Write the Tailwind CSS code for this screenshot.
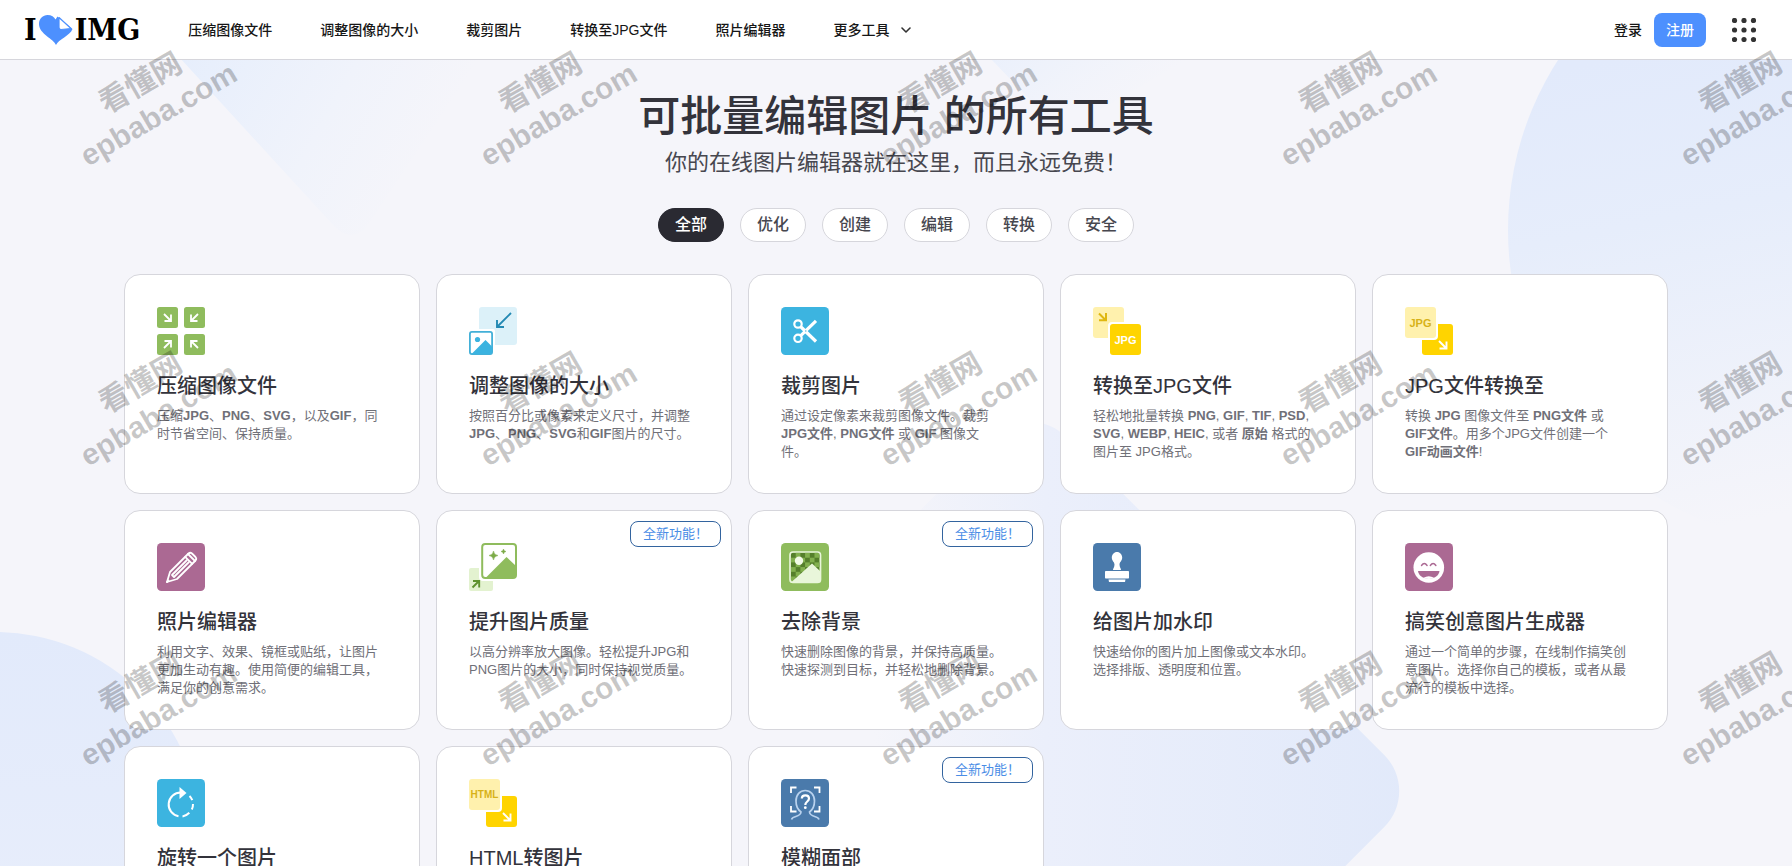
<!DOCTYPE html>
<html lang="zh-CN">
<head>
<meta charset="utf-8">
<meta name="viewport" content="width=device-width, initial-scale=1">
<title>iLoveIMG</title>
<script src="https://cdn.jsdelivr.net/npm/@tailwindcss/browser@4"></script>
</head>
<body class="bg-[#f5f5fa] font-['Liberation_Sans','Noto_Sans_CJK_SC',sans-serif] text-[#33333b]">
<div class="relative isolate h-screen overflow-hidden">

  <!-- Decorative background shapes -->
  <svg class="absolute inset-0 -z-10 h-full w-full" viewBox="0 0 1792 866" preserveAspectRatio="xMidYMin slice" aria-hidden="true">
    <defs>
      <linearGradient id="bgA" x1="0" y1="0" x2="0.9" y2="0.3"><stop offset="0" stop-color="#e6eefc"/><stop offset="0.6" stop-color="#f0f3fb"/><stop offset="1" stop-color="#f5f5fa"/></linearGradient>
      <linearGradient id="bgB" x1="0.3" y1="0.2" x2="0.45" y2="0.95"><stop offset="0" stop-color="#e2eafb"/><stop offset="0.35" stop-color="#e6edfb"/><stop offset="1" stop-color="#f5f5fa"/></linearGradient>
      <linearGradient id="bgC" x1="0" y1="1" x2="1" y2="0"><stop offset="0.3" stop-color="#f5f5fa"/><stop offset="0.52" stop-color="#ebeffb"/><stop offset="1" stop-color="#e1e9fa"/></linearGradient>
      <linearGradient id="bgD" x1="0" y1="0" x2="0" y2="1"><stop offset="0" stop-color="#e2eafb"/><stop offset="1" stop-color="#eaeffb"/></linearGradient>
    </defs>
    <path d="M180 58L334 226Q354 246 370 222L480 58Z" fill="url(#bgA)"/>
    <path d="M990 58L1040 110L1100 110L1190 58Z" fill="url(#bgA)" opacity=".7"/>
    <circle cx="1822" cy="230" r="314" fill="url(#bgB)"/>
    <circle cx="-5" cy="839" r="207" fill="url(#bgD)"/>
    <rect x="754" y="515" width="552" height="552" rx="51" transform="rotate(45 1030 791)" fill="url(#bgC)"/>
  </svg>

  <header class="flex h-[60px] items-center border-b border-[#d6d6dc] bg-white px-6 text-sm font-medium text-[#161616]">
    <a href="#" aria-label="I love IMG" class="mr-12 flex items-center gap-0.5 font-['DejaVu_Serif_Condensed','DejaVu_Serif',serif] text-[30px] leading-9 font-bold text-black">
      <span>I</span>
      <svg class="h-[30px] w-[34px]" viewBox="0 0 34 30" aria-hidden="true">
        <path d="M17 30C15 24 0 19 0 9C0 3.500 4 0 8.500 0C12.500 0 15.200 2 16.500 4.500L18.500 1.500L33.500 14C31 21 19.500 24 17 30Z" fill="#4d90fe"/>
        <path d="M20 2.500L32 13.500L22 14.500Q20 14.500 20 12.500Z" fill="#fff" stroke="#4d90fe" stroke-width="1.200" stroke-linejoin="round"/>
      </svg>
      <span>IMG</span>
    </a>
    <nav class="flex items-center gap-12">
      <a href="#">压缩图像文件</a>
      <a href="#">调整图像的大小</a>
      <a href="#">裁剪图片</a>
      <a href="#">转换至JPG文件</a>
      <a href="#">照片编辑器</a>
      <button type="button" class="flex items-center gap-3">更多工具
        <svg class="size-[10px]" viewBox="0 0 10 10" fill="none" stroke="#333" stroke-width="1.600" stroke-linecap="round" stroke-linejoin="round" aria-hidden="true"><path d="M1 3L5 7L9 3"/></svg>
      </button>
    </nav>
    <div class="ml-auto flex items-center gap-3 pr-3">
      <a href="#">登录</a>
      <a href="#" class="rounded-lg bg-[#4d90fe] px-3 py-[7px] leading-5 text-white">注册</a>
      <button type="button" aria-label="全部工具" class="ml-[14px]">
        <svg class="size-6" viewBox="0 0 24 24" fill="#333" aria-hidden="true"><circle cx="2.500" cy="2.500" r="2.600"/><circle cx="12" cy="2.500" r="2.600"/><circle cx="21.500" cy="2.500" r="2.600"/><circle cx="2.500" cy="12" r="2.600"/><circle cx="12" cy="12" r="2.600"/><circle cx="21.500" cy="12" r="2.600"/><circle cx="2.500" cy="21.500" r="2.600"/><circle cx="12" cy="21.500" r="2.600"/><circle cx="21.500" cy="21.500" r="2.600"/></svg>
      </button>
    </div>
  </header>

  <main class="mx-auto max-w-[1544px] pt-[33px]">
    <h1 class="text-center text-[42px] leading-[48px] font-medium">可批量编辑图片 的所有工具</h1>
    <p class="mt-1.5 text-center text-[22px] leading-8 text-[#47474f]">你的在线图片编辑器就在这里，而且永远免费！</p>

    <div class="mt-[29px] flex justify-center gap-4 leading-8 font-medium text-[#47474f]">
      <button type="button" class="rounded-full border border-[#2a2a32] bg-[#2a2a32] px-4 text-white">全部</button>
      <button type="button" class="rounded-full border border-[#d6d6dc] bg-white px-4">优化</button>
      <button type="button" class="rounded-full border border-[#d6d6dc] bg-white px-4">创建</button>
      <button type="button" class="rounded-full border border-[#d6d6dc] bg-white px-4">编辑</button>
      <button type="button" class="rounded-full border border-[#d6d6dc] bg-white px-4">转换</button>
      <button type="button" class="rounded-full border border-[#d6d6dc] bg-white px-4">安全</button>
    </div>

    <div class="mt-8 grid auto-rows-[220px] grid-cols-5 gap-4 text-[13px] leading-[18px] text-[#707078]">

      <a href="#" class="relative rounded-2xl border border-[#d6d6dc] bg-white p-8">
        <svg class="mb-[17px] size-12" viewBox="0 0 48 48" aria-hidden="true">
          <g fill="#8fbc5d"><rect width="21" height="21" rx="2.500"/><rect x="27" width="21" height="21" rx="2.500"/><rect y="27" width="21" height="21" rx="2.500"/><rect x="27" y="27" width="21" height="21" rx="2.500"/></g>
          <g fill="none" stroke="#fff" stroke-width="1.800"><path d="M7 7L14 14M14 7.500V14H7.500"/><path d="M41 7L34 14M34 7.500V14H40.500"/><path d="M7 41L14 34M14 40.500V34H7.500"/><path d="M41 41L34 34M34 40.500V34H40.500"/></g>
        </svg>
        <h3 class="mb-[7px] text-xl leading-7 font-medium text-[#33333b]">压缩图像文件</h3>
        <p>压缩<b class="font-bold">JPG</b>、<b class="font-bold">PNG</b>、<b class="font-bold">SVG</b>，以及<b class="font-bold">GIF</b>，同<br>时节省空间、保持质量。</p>
      </a>

      <a href="#" class="relative rounded-2xl border border-[#d6d6dc] bg-white p-8">
        <svg class="mb-[17px] size-12" viewBox="0 0 48 48" aria-hidden="true">
          <rect x="10" width="38" height="38" rx="3" fill="#dcf1f9"/>
          <path d="M42 6L28.500 19.500M28 13V20H35" fill="none" stroke="#2389b3" stroke-width="1.900"/>
          <path d="M8 22H24Q26 22 26 24V40H8Z" fill="#fff"/>
          <rect x=".900" y="24.900" width="22.200" height="22.200" rx="2" fill="#fff" stroke="#43b0d8" stroke-width="1.800"/>
          <circle cx="8.500" cy="32.500" r="2.600" fill="#3bb3e0"/><path d="M2.500 47L16.500 33L23 39.500V45Q23 47 21 47Z" fill="#3bb3e0"/>
        </svg>
        <h3 class="mb-[7px] text-xl leading-7 font-medium text-[#33333b]">调整图像的大小</h3>
        <p>按照百分比或像素来定义尺寸，并调整<br><b class="font-bold">JPG</b>、<b class="font-bold">PNG</b>、<b class="font-bold">SVG</b>和<b class="font-bold">GIF</b>图片的尺寸。</p>
      </a>

      <a href="#" class="relative rounded-2xl border border-[#d6d6dc] bg-white p-8">
        <svg class="mb-[17px] size-12" viewBox="0 0 48 48" aria-hidden="true">
          <rect width="48" height="48" rx="4.500" fill="#3cb4e0"/>
          <g fill="none" stroke="#fff"><circle cx="17" cy="17" r="3.700" stroke-width="2.200"/><circle cx="17" cy="31.300" r="3.700" stroke-width="2.200"/><path d="M19.500 19.500L35 34.500" stroke-width="3.200"/><path d="M19.500 28.800L35 13.800" stroke-width="3.200"/></g><circle cx="24.800" cy="24" r=".700" fill="#3cb4e0"/>
        </svg>
        <h3 class="mb-[7px] text-xl leading-7 font-medium text-[#33333b]">裁剪图片</h3>
        <p>通过设定像素来裁剪图像文件。裁剪<br><b class="font-bold">JPG文件</b>, <b class="font-bold">PNG文件</b> 或 <b class="font-bold">GIF</b> 图像文<br>件。</p>
      </a>

      <a href="#" class="relative rounded-2xl border border-[#d6d6dc] bg-white p-8">
        <svg class="mb-[17px] size-12" viewBox="0 0 48 48" aria-hidden="true">
          <rect width="31" height="31" rx="3" fill="#fff1ad"/><path d="M6 6.500L12.500 13M13 6V13.200H6" fill="none" stroke="#dfb70f" stroke-width="2"/>
          <rect x="15" y="15" width="33" height="33" rx="4" fill="#fff"/><rect x="17" y="17" width="31" height="31" rx="3" fill="#ffd400"/>
          <text x="32.500" y="36.500" text-anchor="middle" class="text-[11px] font-bold" fill="#fff">JPG</text>
        </svg>
        <h3 class="mb-[7px] text-xl leading-7 font-medium text-[#33333b]">转换至JPG文件</h3>
        <p>轻松地批量转换 <b class="font-bold">PNG</b>, <b class="font-bold">GIF</b>, <b class="font-bold">TIF</b>, <b class="font-bold">PSD</b>,<br><b class="font-bold">SVG</b>, <b class="font-bold">WEBP</b>, <b class="font-bold">HEIC</b>, 或者 <b class="font-bold">原始</b> 格式的<br>图片至 JPG格式。</p>
      </a>

      <a href="#" class="relative rounded-2xl border border-[#d6d6dc] bg-white p-8">
        <svg class="mb-[17px] size-12" viewBox="0 0 48 48" aria-hidden="true">
          <rect x="17" y="17" width="31" height="31" rx="3" fill="#ffd400"/><rect width="33" height="33" rx="4" fill="#fff"/><rect width="31" height="31" rx="3" fill="#fff1ad"/>
          <text x="15.500" y="19.500" text-anchor="middle" class="text-[11px] font-bold" fill="#d7b118">JPG</text>
          <path d="M34 34L41 41M41.500 34.500V41.500H34.500" fill="none" stroke="#fff" stroke-width="1.900"/>
        </svg>
        <h3 class="mb-[7px] text-xl leading-7 font-medium text-[#33333b]">JPG文件转换至</h3>
        <p>转换 <b class="font-bold">JPG</b> 图像文件至 <b class="font-bold">PNG文件</b> 或<br><b class="font-bold">GIF文件</b>。用多个JPG文件创建一个<br><b class="font-bold">GIF动画文件</b>!</p>
      </a>

      <a href="#" class="relative rounded-2xl border border-[#d6d6dc] bg-white p-8">
        <svg class="mb-[17px] size-12" viewBox="0 0 48 48" aria-hidden="true">
          <rect width="48" height="48" rx="4.500" fill="#ab6993"/>
          <g fill="none" stroke="#fff" stroke-width="1.800" stroke-linejoin="round" stroke-linecap="round"><path d="M10 39L13 29L31.500 10.500Q33.200 9 35 10.500L38.500 14Q40 15.800 38.500 17.500L20 36Z"/><path d="M28.200 13.800L35.200 20.800M31 11L38 18M29.500 17.500L15 32L17 34L31.500 19.500M10 39L11.500 37.500"/></g>
        </svg>
        <h3 class="mb-[7px] text-xl leading-7 font-medium text-[#33333b]">照片编辑器</h3>
        <p>利用文字、效果、镜框或贴纸，让图片<br>更加生动有趣。使用简便的编辑工具，<br>满足你的创意需求。</p>
      </a>

      <a href="#" class="relative rounded-2xl border border-[#d6d6dc] bg-white p-8">
        <span class="absolute top-[10px] right-[10px] rounded-lg border border-[#33649f] px-3 leading-6 text-[#4a8de6]">全新功能！</span>
        <svg class="mb-[17px] size-12" viewBox="0 0 48 48" aria-hidden="true">
          <rect y="25" width="24" height="23" rx="2" fill="#e3f2d0"/><rect x="10" y="-2" width="40" height="40" rx="4" fill="#fff"/>
          <rect x="13.200" y="1" width="33.800" height="34" rx="3" fill="#fff" stroke="#8fbc5d" stroke-width="2"/>
          <path d="M16.500 35L37.500 14L47 23V33Q47 35 45 35Z" fill="#8fbc5d"/>
          <path d="M24.500 8Q25 12 29 12.500Q25 13 24.500 17Q24 13 20 12.500Q24 12 24.500 8ZM34.500 6Q34.800 8.200 37 8.500Q34.800 8.800 34.500 11Q34.200 8.800 32 8.500Q34.200 8.200 34.500 6Z" fill="#7cab48" stroke="#7cab48" stroke-width=".500"/>
          <path d="M3.500 44.500L10 38M4 38H10.200V44.500" fill="none" stroke="#5f922f" stroke-width="1.900"/>
        </svg>
        <h3 class="mb-[7px] text-xl leading-7 font-medium text-[#33333b]">提升图片质量</h3>
        <p>以高分辨率放大图像。轻松提升JPG和<br>PNG图片的大小，同时保持视觉质量。</p>
      </a>

      <a href="#" class="relative rounded-2xl border border-[#d6d6dc] bg-white p-8">
        <span class="absolute top-[10px] right-[10px] rounded-lg border border-[#33649f] px-3 leading-6 text-[#4a8de6]">全新功能！</span>
        <svg class="mb-[17px] size-12" viewBox="0 0 48 48" aria-hidden="true">
          <defs><pattern id="checks" x="10" y="10" width="9.400" height="9.400" patternUnits="userSpaceOnUse"><rect width="9.400" height="9.400" fill="#82b04e"/><path d="M0 0H4.700V9.400H9.400V4.700H0Z" fill="#557f2b"/></pattern></defs>
          <rect width="48" height="48" rx="4.500" fill="#8fbc5d"/>
          <rect x="9" y="9" width="30.500" height="30.500" rx="3" fill="url(#checks)" stroke="#e9f6da" stroke-width="1.700"/>
          <circle cx="18" cy="17.800" r="4.200" fill="#f1fae6"/>
          <path d="M10.500 39L31 20.500L39 28V37.500Q39 39 37.500 39Z" fill="#e9f6da"/>
        </svg>
        <h3 class="mb-[7px] text-xl leading-7 font-medium text-[#33333b]">去除背景</h3>
        <p>快速删除图像的背景，并保持高质量。<br>快速探测到目标，并轻松地删除背景。</p>
      </a>

      <a href="#" class="relative rounded-2xl border border-[#d6d6dc] bg-white p-8">
        <svg class="mb-[17px] size-12" viewBox="0 0 48 48" aria-hidden="true">
          <rect width="48" height="48" rx="4.500" fill="#4a7aab"/>
          <path d="M24 9C27 9 29.200 11.500 29.200 14.500C29.200 18 26.500 19 26.500 21.500C26.500 24 28 25.500 28 27H20C20 25.500 21.500 24 21.500 21.500C21.500 19 18.800 18 18.800 14.500C18.800 11.500 21 9 24 9Z" fill="#fff"/>
          <rect x="12" y="28" width="24" height="7.500" rx=".700" fill="#fff"/><path d="M15.500 36.500H32.500L32 39H16Z" fill="#fff"/>
        </svg>
        <h3 class="mb-[7px] text-xl leading-7 font-medium text-[#33333b]">给图片加水印</h3>
        <p>快速给你的图片加上图像或文本水印。<br>选择排版、透明度和位置。</p>
      </a>

      <a href="#" class="relative rounded-2xl border border-[#d6d6dc] bg-white p-8">
        <svg class="mb-[17px] size-12" viewBox="0 0 48 48" aria-hidden="true">
          <rect width="48" height="48" rx="4.500" fill="#ab6993"/><circle cx="23.800" cy="24.500" r="15.300" fill="#fff"/>
          <g fill="none" stroke="#ab6993" stroke-width="1.400" stroke-linecap="round"><path d="M16.500 22.500Q19.300 18.500 22.100 22.500M25.300 22.500Q28.100 18.500 30.900 22.500"/></g>
          <path d="M13 28H34.500C34 32 30.500 35.500 23.800 35.500C17 35.500 13.500 32 13 28Z" fill="#ab6993"/><path d="M18.500 34.800Q23.800 31.800 29 34.800Q24 37 18.500 34.800Z" fill="#fff"/>
        </svg>
        <h3 class="mb-[7px] text-xl leading-7 font-medium text-[#33333b]">搞笑创意图片生成器</h3>
        <p>通过一个简单的步骤，在线制作搞笑创<br>意图片。选择你自己的模板，或者从最<br>流行的模板中选择。</p>
      </a>

      <a href="#" class="relative rounded-2xl border border-[#d6d6dc] bg-white p-8">
        <svg class="mb-[17px] size-12" viewBox="0 0 48 48" aria-hidden="true">
          <rect width="48" height="48" rx="4.500" fill="#3cb4e0"/>
          <path d="M21.500 37.300A12 12 0 0 1 24 13.500H25" fill="none" stroke="#fff" stroke-width="2"/><path d="M22.500 8L29.500 14L22.500 20Z" fill="#fff"/>
          <path d="M32.500 17A12 12 0 0 1 35.300 21.200M36 25A12 12 0 0 1 34.800 30.500M32.300 33.800A12 12 0 0 1 25.500 37.400" fill="none" stroke="#fff" stroke-width="2"/>
        </svg>
        <h3 class="mb-[7px] text-xl leading-7 font-medium text-[#33333b]">旋转一个图片</h3>
      </a>

      <a href="#" class="relative rounded-2xl border border-[#d6d6dc] bg-white p-8">
        <svg class="mb-[17px] size-12" viewBox="0 0 48 48" aria-hidden="true">
          <rect x="17" y="17" width="31" height="31" rx="3" fill="#ffd400"/><rect width="33" height="33" rx="4" fill="#fff"/><rect width="31" height="31" rx="3" fill="#fff1ad"/>
          <text x="15.500" y="19" text-anchor="middle" class="text-[10px] font-bold" fill="#d7b118">HTML</text>
          <path d="M34 34L41 41M41.500 34.500V41.500H34.500" fill="none" stroke="#fff" stroke-width="1.900"/>
        </svg>
        <h3 class="mb-[7px] text-xl leading-7 font-medium text-[#33333b]">HTML转图片</h3>
      </a>

      <a href="#" class="relative rounded-2xl border border-[#d6d6dc] bg-white p-8">
        <span class="absolute top-[10px] right-[10px] rounded-lg border border-[#33649f] px-3 leading-6 text-[#4a8de6]">全新功能！</span>
        <svg class="mb-[17px] size-12" viewBox="0 0 48 48" aria-hidden="true">
          <rect width="48" height="48" rx="4.500" fill="#4a7aab"/>
          <path d="M10 14V8.500H15.500M33 8.500H38.500V14M10 27V32.500H15.500M33 32.500H38.500V27" fill="none" stroke="#fff" stroke-width="1.800"/>
          <path d="M10.500 40.500C11.500 36.500 19.500 38.500 20 33C16.500 30.500 15 26.500 15 22C15 15.500 19 11.500 24.200 11.500C29.500 11.500 33.500 15.500 33.500 22C33.500 26.500 32 30.500 28.500 33C29 38.500 37 36.500 38 40.500" fill="none" stroke="#b9d2ee" stroke-width="1.700"/>
          <path d="M20.800 19.500C20.800 15.200 28 15.200 28 19.500C28 22.500 24.300 22.500 24.300 26" fill="none" stroke="#fff" stroke-width="2.200"/><circle cx="24.300" cy="28.700" r="1.400" fill="#fff"/>
        </svg>
        <h3 class="mb-[7px] text-xl leading-7 font-medium text-[#33333b]">模糊面部</h3>
      </a>
    </div>
  </main>

  <!-- Watermark tiles laid over the whole page -->
  <div class="pointer-events-none absolute inset-0 overflow-hidden" aria-hidden="true">
    <div class="-mt-[51px] -ml-[50px] grid auto-rows-[300px] grid-cols-[repeat(5,400px)] place-items-center text-center text-[30px] leading-9 font-bold text-black/22">
      <p class="-rotate-30">看懂网<br>epbaba.com</p><p class="-rotate-30">看懂网<br>epbaba.com</p><p class="-rotate-30">看懂网<br>epbaba.com</p><p class="-rotate-30">看懂网<br>epbaba.com</p><p class="-rotate-30">看懂网<br>epbaba.com</p>
      <p class="-rotate-30">看懂网<br>epbaba.com</p><p class="-rotate-30">看懂网<br>epbaba.com</p><p class="-rotate-30">看懂网<br>epbaba.com</p><p class="-rotate-30">看懂网<br>epbaba.com</p><p class="-rotate-30">看懂网<br>epbaba.com</p>
      <p class="-rotate-30">看懂网<br>epbaba.com</p><p class="-rotate-30">看懂网<br>epbaba.com</p><p class="-rotate-30">看懂网<br>epbaba.com</p><p class="-rotate-30">看懂网<br>epbaba.com</p><p class="-rotate-30">看懂网<br>epbaba.com</p>
    </div>
  </div>
</div>
</body>
</html>
